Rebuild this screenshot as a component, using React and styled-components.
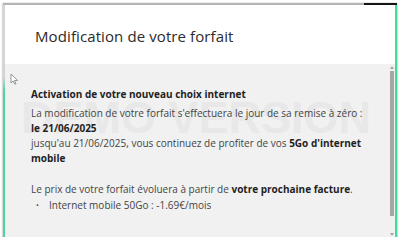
import styled, { createGlobalStyle } from "styled-components";

const Global = createGlobalStyle`
  html, body {
    margin: 0;
    padding: 0;
    background: #ffffff;
  }
  body {
    font-family: "Open Sans", "Liberation Sans", sans-serif;
  }
`;

const Cadre = styled.div`
  margin: 3px 3px 0 3px;
  width: 394px;
  height: 234px;
  display: flex;
  flex-direction: column;
  box-shadow: 0 1px 2px rgba(0, 0, 0, 0.35), 0 0 1px rgba(0, 0, 0, 0.3);
  position: relative;
`;

const BordHaut = styled.div`
  height: 2px;
  background: linear-gradient(to right, #b4b4b4 0, #b4b4b4 91.5%, #151515 91.5%);
`;

const Rangee = styled.div`
  flex: 1;
  display: flex;
  min-height: 0;
`;

const BordGauche = styled.div`
  width: 2px;
  background: linear-gradient(to bottom, #d4d4d4 0, #d4d4d4 31%, #4fd69f 37%, #4fd69f 100%);
`;

const BordDroit = styled.div`
  width: 2px;
  background: #3fdc9c;
`;

const Principal = styled.div`
  flex: 1;
  display: flex;
  flex-direction: column;
  min-width: 0;
`;

const Entete = styled.header`
  height: 59px;
  background: #ffffff;
  display: flex;
  align-items: center;
  padding-left: 30px;
  padding-top: 2px;
  box-sizing: border-box;
`;

const Titre = styled.h1`
  margin: 0;
  font-size: 15px;
  font-weight: 400;
  color: #2b2b2b;
  letter-spacing: 0.1px;
`;

const Corps = styled.div`
  flex: 1;
  display: flex;
  background: #f1f1f1;
  position: relative;
  overflow: hidden;
`;

const Filigrane = styled.div`
  position: absolute;
  left: 16px;
  top: 31px;
  font-family: "Liberation Sans", sans-serif;
  font-weight: 700;
  font-size: 45px;
  line-height: 1;
  color: #e8e8e8;
  white-space: nowrap;
  pointer-events: none;
`;

const Curseur = styled.svg`
  position: absolute;
  left: 5px;
  top: 9px;
`;

const Contenu = styled.div`
  flex: 1;
  position: relative;
  padding: 23px 0 0 26px;
  font-size: 10px;
  line-height: 15px;
  color: #444444;
`;

const SousTitre = styled.h2`
  margin: 0 0 4px 0;
  font-size: 10px;
  font-weight: 700;
  color: #1f1f1f;
`;

const Paragraphe = styled.p`
  margin: ${(p) => p.$avant || 0}px 0 0 0;
`;

const Gras = styled.strong`
  font-weight: 700;
  color: #1f1f1f;
`;

const Liste = styled.ul`
  margin: 1px 0 0 0;
  padding: 0 0 0 18px;
  list-style: none;
`;

const Puce = styled.li`
  position: relative;
  &::before {
    content: "·";
    position: absolute;
    left: -13px;
    top: 0;
    font-weight: 700;
  }
`;

const Defilement = styled.div`
  width: 7px;
  display: flex;
  flex-direction: column;
  align-items: center;
  padding: 2px 0 1px;
  box-sizing: border-box;
`;

const Fleche = styled.div`
  width: 0;
  height: 0;
  border-left: 2.5px solid transparent;
  border-right: 2.5px solid transparent;
  ${(p) =>
    p.$bas
      ? "border-top: 3px solid #a3a3a3;"
      : "border-bottom: 3px solid #a3a3a3;"}
`;

const Piste = styled.div`
  flex: 1;
  width: 100%;
  display: flex;
  justify-content: center;
  padding: 2px 0 17px;
  box-sizing: border-box;
`;

const Pouce = styled.div`
  width: 4px;
  height: 100%;
  background: #a6a6a6;
`;

export default function App() {
  return (
    <>
      <Global />
      <Cadre>
        <BordHaut />
        <Rangee>
          <BordGauche />
          <Principal>
            <Entete>
              <Titre>Modification de votre forfait</Titre>
            </Entete>
            <Corps>
              <Filigrane>DEMO VERSION</Filigrane>
              <Curseur width="9" height="12" viewBox="0 0 9 12">
                <path
                  d="M1 1 L1 10 L3.2 8 L4.8 11.2 L6 10.6 L4.5 7.5 L7.6 7.4 Z"
                  fill="#ffffff"
                  stroke="#8a8a8a"
                  strokeWidth="0.9"
                  strokeLinejoin="round"
                />
              </Curseur>
              <Contenu>
                <SousTitre>Activation de votre nouveau choix internet</SousTitre>
                <Paragraphe>
                  La modification de votre forfait s'effectuera le jour de sa remise à zéro :
                  <br />
                  <Gras>le 21/06/2025</Gras>
                  <br />
                  jusqu'au 21/06/2025, vous continuez de profiter de vos{" "}
                  <Gras>5Go d'internet mobile</Gras>
                </Paragraphe>
                <Paragraphe $avant={16}>
                  Le prix de votre forfait évoluera à partir de{" "}
                  <Gras>votre prochaine facture</Gras>.
                </Paragraphe>
                <Liste>
                  <Puce>Internet mobile 50Go : -1.69€/mois</Puce>
                </Liste>
              </Contenu>
              <Defilement>
                <Fleche />
                <Piste>
                  <Pouce />
                </Piste>
                <Fleche $bas />
              </Defilement>
            </Corps>
          </Principal>
          <BordDroit />
        </Rangee>
      </Cadre>
    </>
  );
}
